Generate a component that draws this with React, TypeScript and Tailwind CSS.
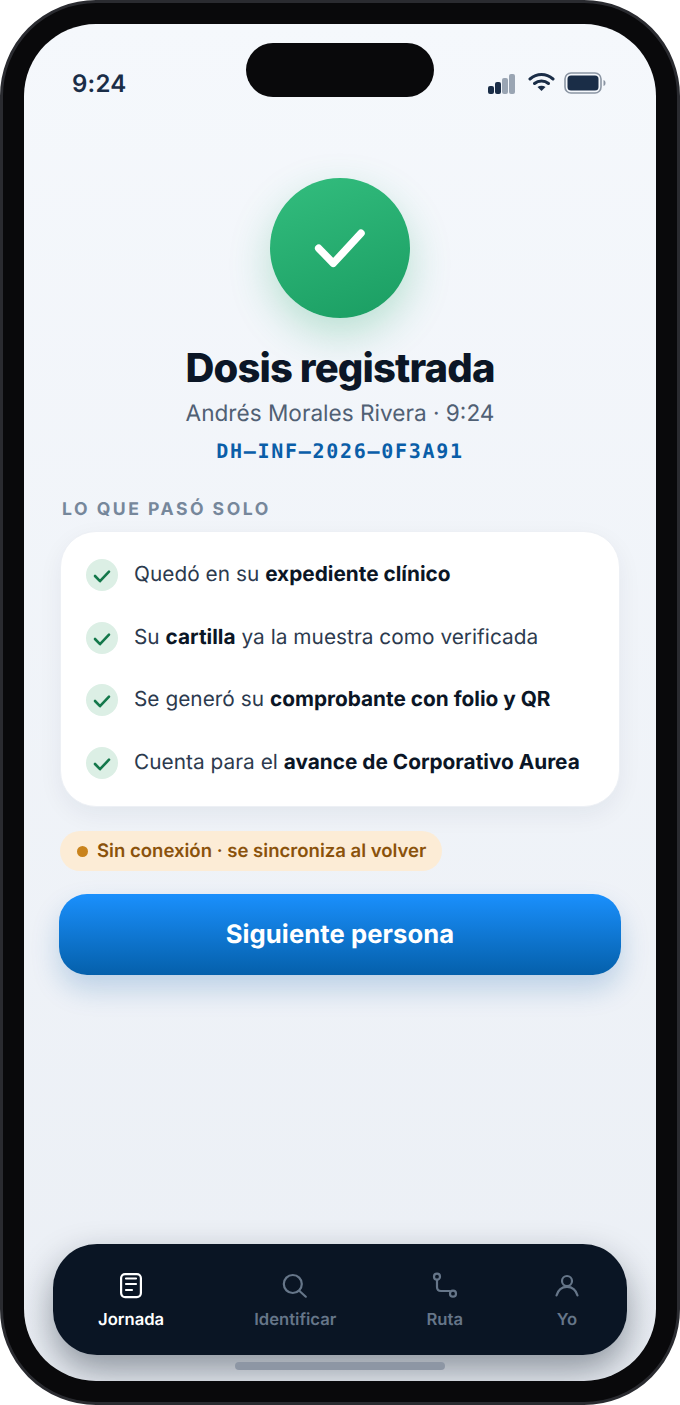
import React from "react";

const rows: React.ReactNode[] = [
  <>Quedó en su <b className="font-bold tracking-normal text-[#0b1626]">expediente clínico</b></>,
  <>Su <b className="font-bold tracking-normal text-[#0b1626]">cartilla</b> ya la muestra como verificada</>,
  <>Se generó su <b className="font-bold tracking-normal text-[#0b1626]">comprobante con folio y QR</b></>,
  <>Cuenta para el <b className="font-bold tracking-normal text-[#0b1626]">avance de Corporativo Aurea</b></>,
];

function NavItem({ label, active, icon, className = "" }: { label: string; active?: boolean; icon: React.ReactNode; className?: string }) {
  return (
    <div className={`flex flex-col items-center gap-[11px] ${active ? "text-white" : "text-[#667689]"} ${className}`}>
      <div className="w-[28px] h-[28px]">{icon}</div>
      <span className="text-[16.64px] leading-[20px] font-semibold">{label}</span>
    </div>
  );
}

export default function App() {
  return (
    <div className="w-[680px] h-[1405px] bg-white [text-rendering:geometricPrecision]" style={{ fontFamily: "Inter, 'Noto Sans', sans-serif" }}>
      <div className="w-full h-full rounded-[96px] bg-[#09090b] border-[3px] border-[#2a2b30] p-[21px]">
        <div className="relative w-full h-full rounded-[72px] overflow-hidden bg-gradient-to-b from-[#f5f8fc] to-[#ebeff5]">
          <div className="absolute left-[222px] top-[19px] w-[188px] h-[54px] rounded-full bg-[#09090b]" />

          <div className="flex items-center justify-between h-[40px] mt-[40px] pl-[48px] pr-[50px]">
            <span className="text-[24px] leading-[40px] font-semibold text-[#1a2d47] tracking-[0.2px]">9:24</span>
            <div className="flex items-center gap-[12px]">
              <svg width="27" height="20" viewBox="0 0 27 20">
                <rect x="0" y="12" width="6" height="8" rx="2" fill="#1a2d47" />
                <rect x="7" y="8" width="6" height="12" rx="2" fill="#1a2d47" />
                <rect x="14" y="4" width="6" height="16" rx="2" fill="#9aa5b3" />
                <rect x="21" y="0" width="6" height="20" rx="2" fill="#9aa5b3" />
              </svg>
              <svg width="27" height="20" viewBox="0 0 27 20" fill="none" className="ml-[1px] mb-[4px]">
                <path d="M2 7 C9 1 18 1 25 7" stroke="#1a2d47" strokeWidth="3" strokeLinecap="round" />
                <path d="M6.5 11.5 C10.5 8 16.5 8 20.5 11.5" stroke="#1a2d47" strokeWidth="3" strokeLinecap="round" />
                <path d="M13.5 19 L9.5 15 C12 13.4 15 13.4 17.5 15 Z" fill="#1a2d47" />
              </svg>
              <svg width="42" height="22" viewBox="0 0 42 22" fill="none" className="-ml-[3px] mb-[2px]">
                <rect x="1" y="1" width="36" height="20" rx="6" stroke="#8b95a3" strokeWidth="1.6" />
                <rect x="3.5" y="3.5" width="31" height="15" rx="3.5" fill="#1a2d47" />
                <path d="M39.5 8 C41 8.5 41.5 9.5 41.5 11 C41.5 12.5 41 13.5 39.5 14 Z" fill="#8b95a3" />
              </svg>
            </div>
          </div>

          <div className="flex flex-col items-center">
            <div className="mt-[74px] w-[140px] h-[140px] rounded-full bg-[linear-gradient(160deg,#33bd7e,#1a9d62)] shadow-[0_16px_40px_rgba(31,170,105,0.28)] flex items-center justify-center text-white">
              <svg viewBox="0 0 64 64" fill="none" stroke="currentColor" strokeWidth="7.5" strokeLinecap="round" strokeLinejoin="round" className="w-[64px] h-[64px]">
                <path d="M10.7 32.3 L25.3 47.3 L53 17.3" />
              </svg>
            </div>
            <h1 className="mt-[24px] text-[40px] leading-[52px] font-extrabold tracking-[-0.87px] text-[#0b1626]">Dosis registrada</h1>
            <p className="mt-[5px] text-[22.6px] leading-[30px] text-[#506074]">Andrés Morales Rivera · 9:24</p>
            <p className="mt-[8px] text-[20px] leading-[28px] font-bold tracking-[1.7px] text-[#0a5ea8]" style={{ fontFamily: "'DejaVu Sans Mono', monospace" }}>DH–INF–2026–0F3A91</p>
          </div>

          <div className="mx-[35px]">
            <div className="mt-[33px] ml-[3px] text-[17.6px] leading-[24px] font-bold tracking-[2.5px] text-[#76879b]">LO QUE PASÓ SOLO</div>
            <div className="mt-[9px] h-[276px] rounded-[36px] bg-white border border-[#edf0f5] shadow-[0_8px_24px_rgba(15,35,70,0.06)] mx-[1px] px-[25px] py-[12px] flex flex-col justify-between">
              {rows.map((r, i) => (
                <div key={i} className="flex items-center gap-[16px] h-[62px]">
                  <div className="w-[32px] h-[32px] rounded-full bg-[#dcefe5] flex items-center justify-center text-[#14784b] shrink-0">
                    <svg viewBox="0 0 20 20" fill="none" stroke="currentColor" strokeWidth="2.6" strokeLinecap="round" strokeLinejoin="round" className="w-[20px] h-[20px]">
                      <path d="M3 11 L8 16.2 L17 6.7" />
                    </svg>
                  </div>
                  <span className="text-[20.8px] leading-[28px] tracking-[0.03px] text-[#2c3a4e] whitespace-nowrap">{r}</span>
                </div>
              ))}
            </div>
            <div className="mt-[24px] ml-[1px] inline-flex items-center gap-[9px] h-[40px] pl-[17px] pr-[16px] rounded-full bg-[#fcecd6]">
              <span className="w-[11px] h-[11px] rounded-full bg-[#c9831c]" />
              <span className="text-[18.56px] leading-[24px] font-semibold text-[#8a520b]">Sin conexión · se sincroniza al volver</span>
            </div>
            <div className="mt-[23px] h-[81px] pt-[2px] rounded-[28px] bg-gradient-to-b from-[#1a90fd] to-[#0560ab] shadow-[0_14px_28px_rgba(10,90,170,0.22)] flex items-center justify-center text-[25.6px] tracking-[0.1px] font-bold text-white">Siguiente persona</div>
          </div>

          <div className="absolute left-[29px] top-[1220px] w-[574px] h-[111px] rounded-[44px] bg-[#0a1524] shadow-[0_16px_36px_rgba(10,21,36,0.42)] flex items-start justify-between pt-[27px] pl-[45px] pr-[50px]">
            <NavItem label="Jornada" active icon={
              <svg viewBox="0 0 28 28" fill="none" stroke="currentColor" strokeWidth="2.2" strokeLinecap="round" className="w-[28px] h-[28px]">
                <rect x="4.1" y="3.1" width="19.8" height="23" rx="4" />
                <path d="M9 7.5h10M9 13h10M9 19h6" />
              </svg>} />
            <NavItem label="Identificar" icon={
              <svg viewBox="0 0 28 28" fill="none" stroke="currentColor" strokeWidth="2.2" strokeLinecap="round" className="w-[28px] h-[28px]">
                <circle cx="11.8" cy="13" r="9" />
                <path d="M18.5 20l6.3 5.7" />
              </svg>} />
            <NavItem label="Ruta" icon={
              <svg viewBox="0 0 28 28" fill="none" stroke="currentColor" strokeWidth="2.2" strokeLinecap="round" className="w-[28px] h-[28px]">
                <circle cx="6" cy="5.7" r="3" />
                <circle cx="22" cy="22.7" r="3" />
                <path d="M6 9v7c0 3 1.5 4 4 4h8.5" />
              </svg>} />
            <NavItem label="Yo" className="-mr-[4px]" icon={
              <svg viewBox="0 0 28 28" fill="none" stroke="currentColor" strokeWidth="2.2" strokeLinecap="round" className="w-[28px] h-[28px]">
                <circle cx="14" cy="10" r="5" />
                <path d="M3.5 24.5C5 19 9 15.8 14 15.8s9 3.2 10.5 8.7" />
              </svg>} />
          </div>
          <div className="absolute left-[211px] top-[1338px] w-[210px] h-[8px] rounded-full bg-[#8d96a4]" />
        </div>
      </div>
    </div>
  );
}
